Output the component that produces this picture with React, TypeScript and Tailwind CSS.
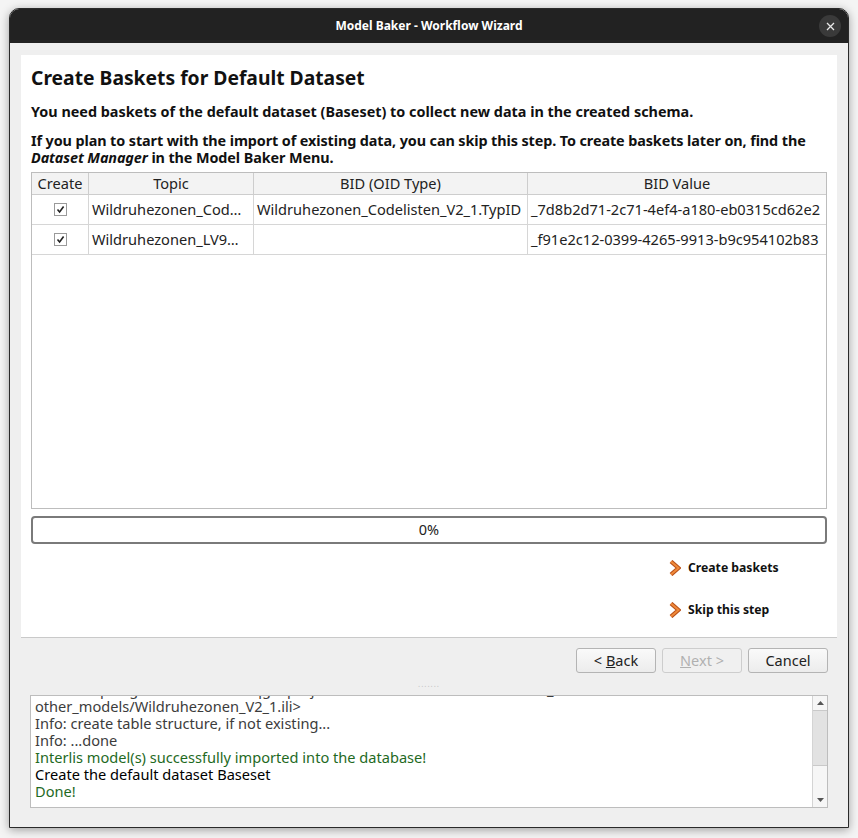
import React from 'react';

const FONT = 'font-["Noto_Sans","Open_Sans",sans-serif]';

const ROWS = [
    { topic: 'Wildruhezonen_Cod…', oid: 'Wildruhezonen_Codelisten_V2_1.TypID', value: '_7d8b2d71-2c71-4ef4-a180-eb0315cd62e2' },
    { topic: 'Wildruhezonen_LV9…', oid: '', value: '_f91e2c12-0399-4265-9913-b9c954102b83' },
];

const LOG = [
    { text: 'Info: compiling ili file <C:/Users/qgis/projects/modelbaker/tests/data/other_models/...', color: 'text-[#3c3c3c]' },
    { text: 'other_models/Wildruhezonen_V2_1.ili>', color: 'text-[#3c3c3c]' },
    { text: 'Info: create table structure, if not existing...', color: 'text-[#3c3c3c]' },
    { text: 'Info: ...done', color: 'text-[#3c3c3c]' },
    { text: 'Interlis model(s) successfully imported into the database!', color: 'text-[#1f6a1f]' },
    { text: 'Create the default dataset Baseset', color: 'text-black' },
    { text: 'Done!', color: 'text-[#1f6a1f]' },
];

function Check() {
    return (
        <div className="w-[13px] h-[13px] border border-[#9a9a9a] bg-white flex items-center justify-center">
            <svg width="9" height="9" viewBox="0 0 9 9">
                <path d="M1.5 4.5 L3.6 7 L7.6 1.5" fill="none" stroke="#222" strokeWidth="1.6" />
            </svg>
        </div>
    );
}

function Chevron() {
    return (
        <svg width="12" height="16" viewBox="0 0 12 16">
            <path d="M2 1.5 L9.5 8 L2 14.5" fill="none" stroke="#b8501a" strokeWidth="4.2" strokeLinejoin="miter" />
            <path d="M2 1.5 L9.5 8 L2 14.5" fill="none" stroke="#f08a3a" strokeWidth="2" strokeLinejoin="miter" />
        </svg>
    );
}

function Button({ children, disabled }: { children: React.ReactNode; disabled?: boolean }) {
    return (
        <div
            className={`w-[80px] h-[25px] rounded-[3px] border flex items-center justify-center text-[14.5px] whitespace-pre ${
                disabled ? 'border-[#cdcdcd] text-[#b0b0b0] bg-[#f0f0f0]' : 'border-[#b4b4b4] text-[#222] bg-gradient-to-b from-[#fafafa] to-[#ececec]'
            }`}
        >
            {children}
        </div>
    );
}

export default function App() {
    return (
        <div className={`w-[858px] h-[838px] bg-[#f4f4f4] pt-[8px] px-[9px] ${FONT}`}>
            <div className="w-[840px] h-[820px] flex flex-col rounded-t-[10px] overflow-hidden border border-[#2a2a2a] shadow-[0_2px_10px_rgba(0,0,0,0.35)] bg-[#efefef]">
                {/* Title bar */}
                <div className="h-[34px] shrink-0 bg-[#222222] flex items-center justify-center relative">
                    <span className="text-white text-[12px] font-bold">Model Baker - Workflow Wizard</span>
                    <div className="absolute right-[7px] top-[6px] w-[22px] h-[22px] rounded-full bg-[#3a3a3a] flex items-center justify-center">
                        <svg width="9" height="9" viewBox="0 0 9 9">
                            <path d="M1 1 L8 8 M8 1 L1 8" stroke="#e8e8e8" strokeWidth="1.3" />
                        </svg>
                    </div>
                </div>

                {/* Page */}
                <div className="mx-[11px] mt-[12px] h-[583px] bg-white flex flex-col px-[10px] border-b border-[#c9c9c9]">
                    <h1 className="mt-[10px] text-[19.3px] font-bold text-[#111] leading-[26px]">Create Baskets for Default Dataset</h1>
                    <p className="mt-[11px] text-[14.4px] font-bold text-[#111] leading-[20px]">
                        You need baskets of the default dataset (Baseset) to collect new data in the created schema.
                    </p>
                    <p className="mt-[10px] text-[14.4px] font-bold text-[#111] leading-[17px] tracking-[-0.1px]">
                        If you plan to start with the import of existing data, you can skip this step. To create baskets later on, find the <i>Dataset Manager</i> in the Model Baker Menu.
                    </p>

                    {/* Table */}
                    <div className="mt-[6px] h-[337px] border border-[#bdbdbd] flex flex-col text-[14.6px] text-[#222]">
                        <div className="grid grid-cols-[57px_165px_274px_1fr] h-[22px] bg-[#f3f3f3] border-b border-[#cdcdcd]">
                            <div className="flex items-center justify-center border-r border-[#cdcdcd]">Create</div>
                            <div className="flex items-center justify-center border-r border-[#cdcdcd]">Topic</div>
                            <div className="flex items-center justify-center border-r border-[#cdcdcd]">BID (OID Type)</div>
                            <div className="flex items-center justify-center">BID Value</div>
                        </div>
                        {ROWS.map((r) => (
                            <div key={r.value} className="grid grid-cols-[57px_165px_274px_1fr] h-[30px] border-b border-[#d6d6d6]">
                                <div className="flex items-center justify-center border-r border-[#d6d6d6]">
                                    <Check />
                                </div>
                                <div className="flex items-center px-[3px] border-r border-[#d6d6d6] whitespace-nowrap overflow-hidden">{r.topic}</div>
                                <div className="flex items-center px-[3px] border-r border-[#d6d6d6] whitespace-nowrap overflow-hidden">{r.oid}</div>
                                <div className="flex items-center px-[3px] whitespace-nowrap overflow-hidden">{r.value}</div>
                            </div>
                        ))}
                    </div>

                    {/* Progress */}
                    <div className="mt-[7px] h-[28px] rounded-[4px] border-2 border-[#7a7a7a] flex items-center justify-center text-[14.5px] text-[#222]">0%</div>

                    {/* Actions */}
                    <div className="mt-[15px] ml-[638px] flex flex-col gap-[24px] text-[12.2px] font-bold text-[#111]">
                        <div className="flex items-center gap-[7px]">
                            <Chevron />
                            <span>Create baskets</span>
                        </div>
                        <div className="flex items-center gap-[7px]">
                            <Chevron />
                            <span>Skip this step</span>
                        </div>
                    </div>
                </div>

                {/* Buttons */}
                <div className="mt-[10px] mr-[20px] flex justify-end gap-[6px]">
                    <Button>
                        {'< '}
                        <span className="underline">B</span>
                        {'ack'}
                    </Button>
                    <Button disabled>
                        <span className="underline">N</span>
                        {'ext >'}
                    </Button>
                    <Button>Cancel</Button>
                </div>

                {/* Splitter handle */}
                <div className="h-[22px] flex items-center justify-center">
                    <span className="text-[8px] tracking-[1px] text-[#c4c4c4] leading-none">.......</span>
                </div>

                {/* Log */}
                <div className="mx-[20px] h-[113px] bg-white border border-[#bdbdbd] flex">
                    <div className="flex-1 overflow-hidden relative">
                        <div className="absolute left-[4px] bottom-[7px] text-[14.6px] leading-[17px] whitespace-nowrap">
                            {LOG.map((l, i) => (
                                <div key={i} className={l.color}>
                                    {l.text}
                                </div>
                            ))}
                        </div>
                    </div>
                    <div className="w-[15px] border-l border-[#d4d4d4] bg-[#f6f6f6] flex flex-col">
                        <div className="h-[14px] flex items-center justify-center">
                            <svg width="7" height="4" viewBox="0 0 7 4"><path d="M0 4 L3.5 0 L7 4Z" fill="#555" /></svg>
                        </div>
                        <div className="h-[56px] bg-[#e2e2e2] border-y border-[#c9c9c9]" />
                        <div className="flex-1" />
                        <div className="h-[14px] flex items-center justify-center">
                            <svg width="7" height="4" viewBox="0 0 7 4"><path d="M0 0 L3.5 4 L7 0Z" fill="#555" /></svg>
                        </div>
                    </div>
                </div>
            </div>
        </div>
    );
}
